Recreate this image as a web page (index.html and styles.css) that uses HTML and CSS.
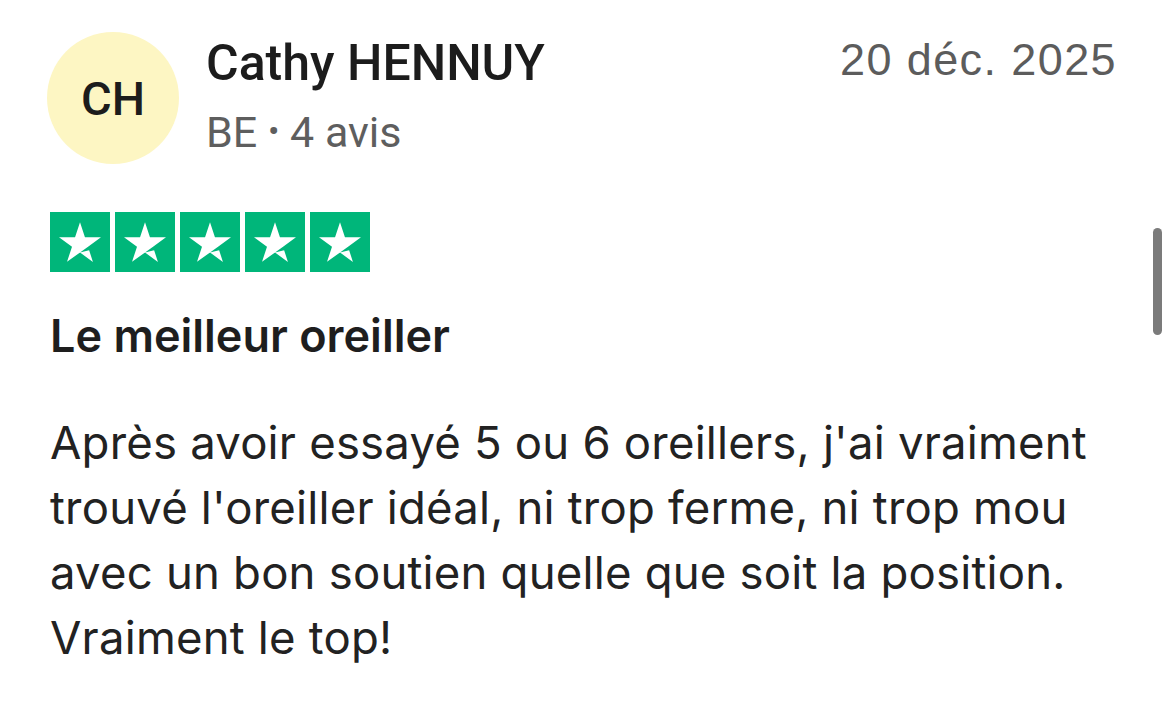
FILE: index.html
```html
<!DOCTYPE html>
<html lang="fr">
<head>
    <title>Avis - Cathy HENNUY</title>
    <meta charset="UTF-8">
    <meta name="viewport" content="width=device-width, initial-scale=1.0">
    <link rel="stylesheet" href="styles.css">
</head>
<body>

  <div class="review">

    <!-- Header: avatar, name, date -->
    <div class="review-header">
      <div class="avatar">CH</div>
      <div class="author">
        <div class="author-name">Cathy HENNUY</div>
        <div class="author-meta">BE <span class="dot">•</span> 4 avis</div>
      </div>
      <div class="review-date">20 déc. 2025</div>
    </div>

    <!-- Stars -->
    <div class="stars">
      <span class="star"><svg viewBox="0 0 24 24"><path d="M12 16.2l3.65-.93 1.52 4.7L12 16.2zm8.4-6.07h-6.42L12 4.08l-1.98 6.05H3.6l5.2 3.74-1.98 6.05 5.2-3.74 3.2-2.3 5.18-3.75z"/></svg></span>
      <span class="star"><svg viewBox="0 0 24 24"><path d="M12 16.2l3.65-.93 1.52 4.7L12 16.2zm8.4-6.07h-6.42L12 4.08l-1.98 6.05H3.6l5.2 3.74-1.98 6.05 5.2-3.74 3.2-2.3 5.18-3.75z"/></svg></span>
      <span class="star"><svg viewBox="0 0 24 24"><path d="M12 16.2l3.65-.93 1.52 4.7L12 16.2zm8.4-6.07h-6.42L12 4.08l-1.98 6.05H3.6l5.2 3.74-1.98 6.05 5.2-3.74 3.2-2.3 5.18-3.75z"/></svg></span>
      <span class="star"><svg viewBox="0 0 24 24"><path d="M12 16.2l3.65-.93 1.52 4.7L12 16.2zm8.4-6.07h-6.42L12 4.08l-1.98 6.05H3.6l5.2 3.74-1.98 6.05 5.2-3.74 3.2-2.3 5.18-3.75z"/></svg></span>
      <span class="star"><svg viewBox="0 0 24 24"><path d="M12 16.2l3.65-.93 1.52 4.7L12 16.2zm8.4-6.07h-6.42L12 4.08l-1.98 6.05H3.6l5.2 3.74-1.98 6.05 5.2-3.74 3.2-2.3 5.18-3.75z"/></svg></span>
    </div>

    <h2 class="review-title">Le meilleur oreiller</h2>

    <p class="review-text">Après avoir essayé 5 ou 6 oreillers, j'ai vraiment trouvé l'oreiller idéal, ni trop ferme, ni trop mou avec un bon soutien quelle que soit la position. Vraiment le top!</p>

  </div>

  <div class="scrollbar"></div>

</body>
</html>
```

FILE: styles.css
```css
/* Basic Reset */
* {
    box-sizing: border-box;
    margin: 0;
    padding: 0;
}

body, html {
    height: 100vh;
    background-color: #ffffff;
    color: #222222;
    font-family: 'Inter', sans-serif;
    overflow: hidden;
}

/* Review card */
.review {
    padding: 32px 53px 0 50px;
}

/* Header */
.review-header {
    display: flex;
    align-items: flex-start;
}

.avatar {
    width: 132px;
    height: 132px;
    margin-left: -3px;
    border-radius: 50%;
    background-color: #fdf6c3;
    color: #1c1c1c;
    display: flex;
    align-items: center;
    justify-content: center;
    font-family: 'Roboto', sans-serif;
    font-weight: 500;
    font-size: 47px;
    flex-shrink: 0;
}

.author {
    margin-left: 27px;
    flex: 1;
}

.author-name {
    font-family: 'Roboto', sans-serif;
    font-weight: 500;
    font-size: 50px;
    line-height: 62px;
    color: #1c1c1c;
}

.author-meta {
    font-family: 'Roboto', sans-serif;
    font-size: 43px;
    line-height: 56px;
    color: #5e5e5e;
    margin-top: 9px;
}

.dot {
    font-size: 34px;
    vertical-align: 4px;
}

.review-date {
    font-family: 'Liberation Sans', sans-serif;
    font-size: 45px;
    letter-spacing: 1.4px;
    color: #5c5c5c;
    line-height: 56px;
}

/* Stars */
.stars {
    display: flex;
    gap: 5px;
    margin-top: 48px;
}

.star {
    width: 60px;
    height: 60px;
    background-color: #00b67a;
    display: flex;
}

.star svg {
    width: 60px;
    height: 60px;
    fill: #ffffff;
}

/* Title */
.review-title {
    font-family: 'Inter', sans-serif;
    font-weight: 600;
    font-size: 45px;
    line-height: 56px;
    margin-top: 36px;
    color: #1e1e1e;
}

/* Body */
.review-text {
    font-family: 'Inter', sans-serif;
    font-size: 45.5px;
    letter-spacing: 0.2px;
    line-height: 65px;
    margin-top: 46px;
    color: #222222;
    max-width: 1075px;
}

/* Scrollbar thumb */
.scrollbar {
    position: absolute;
    top: 228px;
    left: 1153px;
    width: 9px;
    height: 107px;
    border-radius: 5px;
    background-color: #7b7b7b;
}
```
